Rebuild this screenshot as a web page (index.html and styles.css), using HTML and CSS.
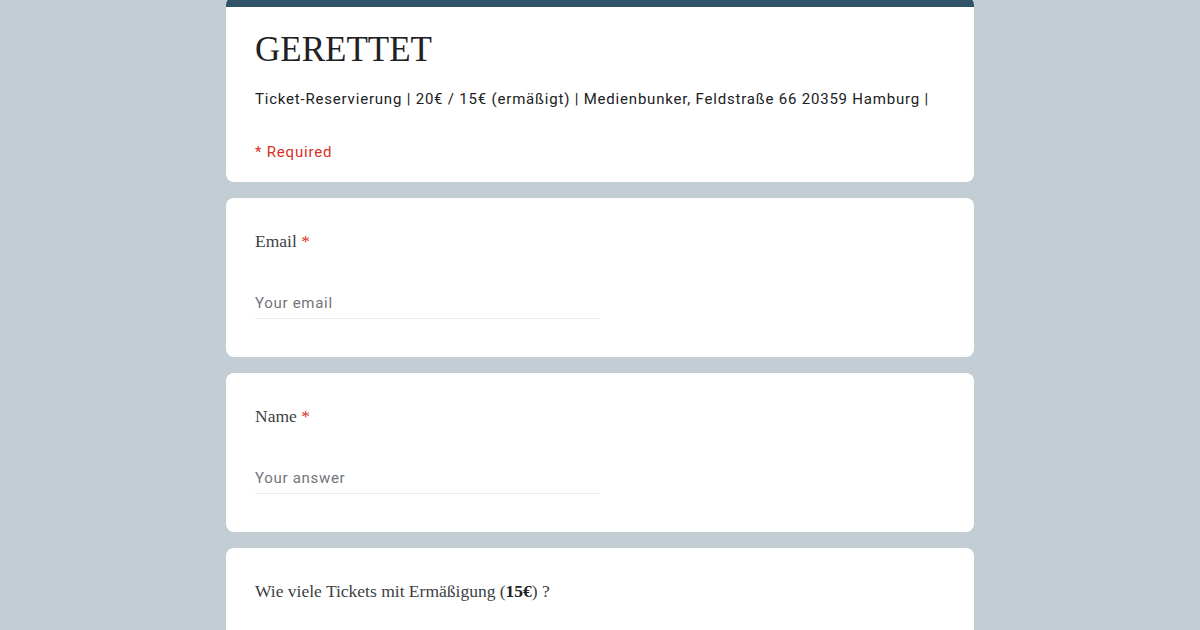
FILE: index.html
```html
<!DOCTYPE html>
<html lang="de">
<head>
<meta charset="utf-8">
<title>GERETTET</title>
<link rel="stylesheet" href="styles.css">
</head>
<body>
<main class="form">
  <section class="card header-card">
    <h1 class="title">GERETTET</h1>
    <p class="desc">Ticket-Reservierung | 20€ / 15€ (ermäßigt) | Medienbunker, Feldstraße 66 20359 Hamburg |</p>
    <p class="required-note">* Required</p>
  </section>
  <section class="card question">
    <div class="q-title">Email <span class="star">*</span></div>
    <div class="input">Your email</div>
  </section>
  <section class="card question">
    <div class="q-title">Name <span class="star">*</span></div>
    <div class="input">Your answer</div>
  </section>
  <section class="card question">
    <div class="q-title">Wie viele Tickets mit Ermäßigung (<b>15€</b>) ?</div>
  </section>
</main>
</body>
</html>
```

FILE: styles.css
```css
html, body {
  margin: 0;
  padding: 0;
  background: #c2cdd4;
  height: 630px;
  overflow: hidden;
}
body {
  font-family: Roboto, "Liberation Sans", sans-serif;
  color: #202124;
}
.form {
  width: 748px;
  margin: -3px auto 0;
  display: flex;
  flex-direction: column;
  gap: 16px;
}
.card {
  background: #fff;
  border-radius: 8px;
  padding: 0 29px;
}
.header-card {
  border-top: 10px solid #2f5469;
  padding-top: 19px;
  padding-bottom: 20px;
}
.title {
  margin: 0;
  font-family: "Liberation Serif", serif;
  font-weight: 400;
  font-size: 35px;
  line-height: 48px;
  color: #202124;
}
.desc {
  margin: 15px 0 0;
  font-size: 15px;
  line-height: 20px;
  letter-spacing: 0.8px;
  color: #202124;
}
.required-note {
  margin: 33px 0 0;
  font-size: 15px;
  line-height: 20px;
  letter-spacing: 0.8px;
  color: #d93025;
}
.question {
  height: 159px;
  box-sizing: border-box;
  padding-top: 31px;
}
.q-title {
  font-family: "Liberation Serif", serif;
  font-size: 17.5px;
  line-height: 24px;
  color: #3c4043;
}
.q-title b {
  color: #202124;
}
.star {
  color: #d93025;
}
.input {
  width: 345px;
  margin-top: 40px;
  font-size: 15px;
  line-height: 20px;
  color: #70757a;
  padding-bottom: 5px;
  border-bottom: 1px solid #e8eaed;
  letter-spacing: 0.7px;
}
```
